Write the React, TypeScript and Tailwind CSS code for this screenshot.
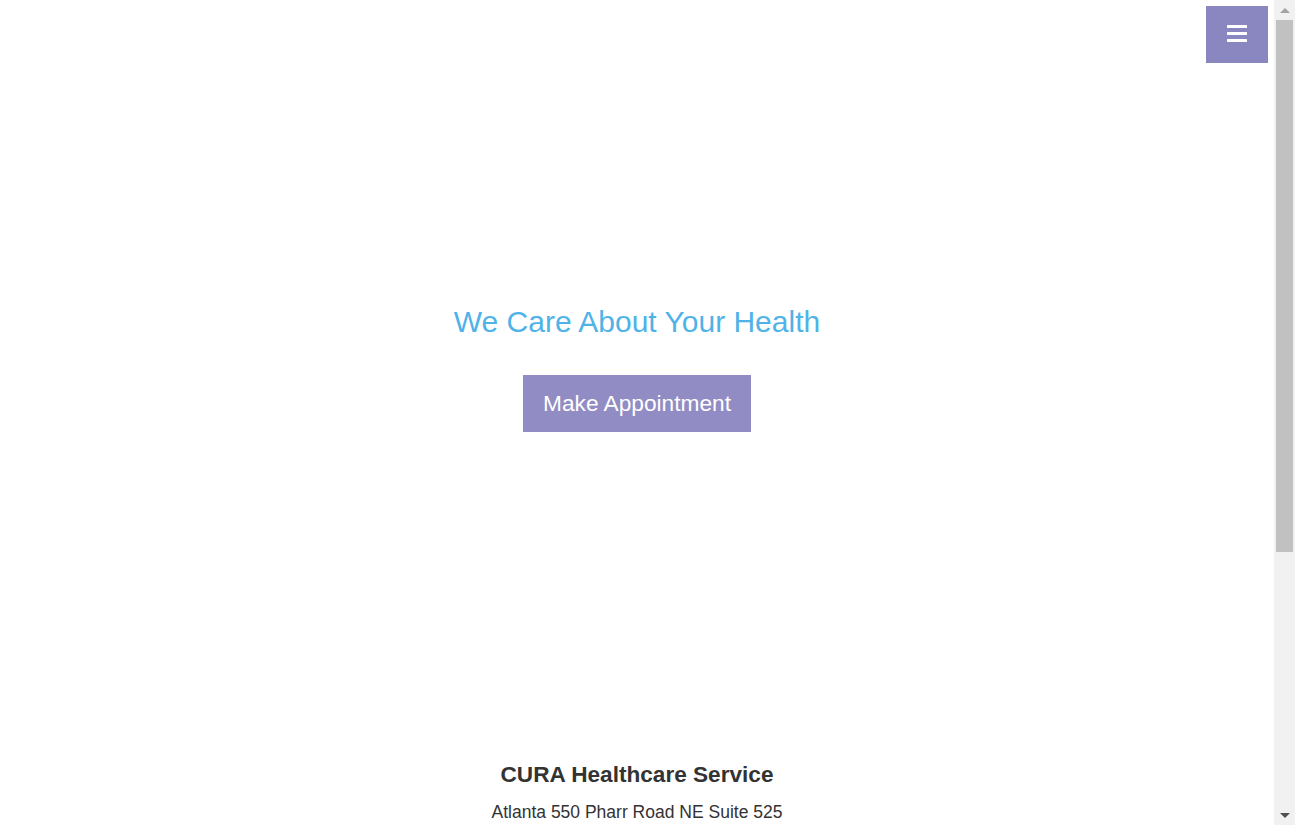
export default function App() {
  return (
    <div className="flex h-[825px] overflow-hidden bg-white font-['Liberation_Sans',Arial,sans-serif] text-[#333]">
      <main className="relative flex-1">
        <button
          type="button"
          className="absolute right-[6px] top-[6px] flex h-[57px] w-[62px] items-center justify-center bg-[#8a86c0]"
        >
          <svg width="20" height="17" viewBox="0 0 20 17" className="-mt-[3px]">
            <rect x="0" y="0" width="20" height="3" rx="0.5" fill="#fff" />
            <rect x="0" y="7" width="20" height="3" rx="0.5" fill="#fff" />
            <rect x="0" y="14" width="20" height="3" rx="0.5" fill="#fff" />
          </svg>
        </button>

        <header className="flex h-[737px] flex-col items-center justify-center">
          <h3 className="text-[30px] leading-[33px] text-[#4fb3e8]">We Care About Your Health</h3>
          <a
            className="mt-[37px] flex h-[57px] items-center bg-[#918cc4] px-[20px] text-[22.7px] text-white"
            href="#appointment"
          >
            Make Appointment
          </a>
        </header>

        <footer className="flex flex-col items-center pt-[26px] text-center">
          <h4 className="text-[22.6px] font-bold leading-[24px]">CURA Healthcare Service</h4>
          <p className="mt-[12px] text-[17.5px] leading-[26px]">Atlanta 550 Pharr Road NE Suite 525</p>
        </footer>
      </main>

      {/* window scrollbar */}
      <div className="flex w-[21px] flex-col items-center bg-[#f1f1f1]">
        <div className="flex h-[20px] w-full items-center justify-center">
          <div className="h-0 w-0 border-x-[5px] border-b-[5px] border-x-transparent border-b-[#a3a3a3]" />
        </div>
        <div className="h-[532px] w-[17px] bg-[#c1c1c1]" />
        <div className="flex-1" />
        <div className="flex h-[20px] w-full items-center justify-center">
          <div className="h-0 w-0 border-x-[5px] border-t-[5px] border-x-transparent border-t-[#505050]" />
        </div>
      </div>
    </div>
  );
}
